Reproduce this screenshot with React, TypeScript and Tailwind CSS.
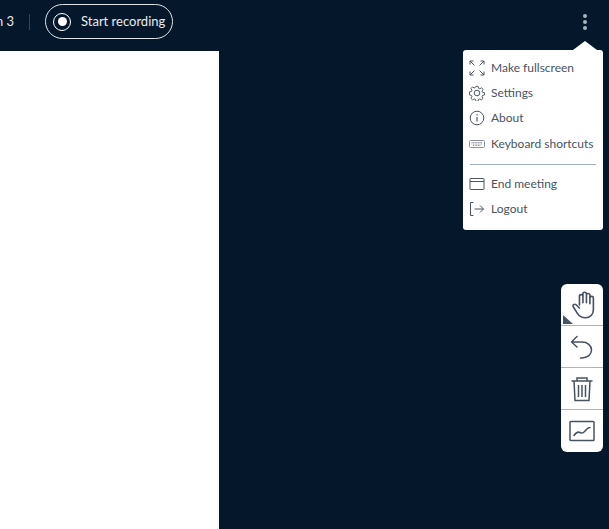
import React from 'react';

const menuTop = [
  { label: 'Make fullscreen', icon: <FullscreenIcon /> },
  { label: 'Settings', icon: <GearIcon /> },
  { label: 'About', icon: <InfoIcon /> },
];

const menuBottom = [
  { label: 'End meeting', icon: <WindowIcon /> },
  { label: 'Logout', icon: <LogoutIcon /> },
];

function FullscreenIcon() {
  return (
    <svg width="16" height="16" viewBox="0 0 16 16" fill="none" stroke="#4a5563" strokeWidth="1">
      <path d="M1 4.500V1H4.500M1 1L5.500 5.500M11.500 1H15V4.500M15 1L10.500 5.500M1 11.500V15H4.500M1 15L5.500 10.500M15 11.500V15H11.500M15 15L10.500 10.500" />
    </svg>
  );
}

function GearIcon() {
  return (
    <svg width="16" height="16" viewBox="0 0 16 16" fill="none" stroke="#4a5563" strokeWidth="1">
      <path d="M6.800 1h2.400l.4 2 1.400.6 1.700-1.100 1.700 1.700-1.100 1.700.6 1.400 2 .4v2.400l-2 .4-.6 1.400 1.100 1.700-1.700 1.700-1.700-1.100-1.400.6-.4 2H6.800l-.4-2-1.400-.6-1.700 1.100-1.700-1.700 1.100-1.700-.6-1.400-2-.4V6.800l2-.4.6-1.400-1.100-1.700 1.700-1.700 1.700 1.100 1.400-.6z" transform="translate(0.4 0.4) scale(0.95)" />
      <circle cx="8" cy="8" r="2.800" />
    </svg>
  );
}

function InfoIcon() {
  return (
    <svg width="16" height="16" viewBox="0 0 16 16" fill="none" stroke="#4a5563" strokeWidth="1">
      <circle cx="8" cy="8" r="6.800" />
      <path d="M8 7v4.500M8 4.200v1.300" strokeWidth="1.200" />
    </svg>
  );
}

function KeyboardIcon() {
  return (
    <svg width="16" height="16" viewBox="0 0 16 16" fill="none" stroke="#8a939d" strokeWidth="1">
      <rect x="0.500" y="4.500" width="15" height="7" rx="1" />
      <path d="M2.500 6.500h11M2.500 8h11M4 9.500h8" strokeDasharray="1 .6" />
    </svg>
  );
}

function WindowIcon() {
  return (
    <svg width="16" height="16" viewBox="0 0 16 16" fill="none" stroke="#4a5563" strokeWidth="1">
      <rect x="1" y="2.500" width="14" height="11" rx="0.500" />
      <path d="M1 5.500h14" />
    </svg>
  );
}

function LogoutIcon() {
  return (
    <svg width="16" height="16" viewBox="0 0 16 16" fill="none" stroke="#4a5563" strokeWidth="1">
      <path d="M4.500 1.500H1.500V14.500H4.500M5.500 8H14.500M11 4.500L14.500 8L11 11.500" />
    </svg>
  );
}

export default function App() {
  return (
    <div className="relative flex h-[529px] w-[609px] flex-col overflow-hidden bg-[#05182b] font-['Lato',sans-serif]">
      {/* Top bar */}
      <header className="flex h-[51px] shrink-0 items-start justify-between pr-[22px]">
        <div className="flex h-[43px] items-center">
          <span className="ml-[-30px] w-[42px] whitespace-nowrap text-right text-[13px] text-[#e3e7eb]">Room 3</span>
          <span className="ml-[17px] h-[16px] w-px bg-[#33475b]" />
          <button className="ml-[15px] flex h-[35px] w-[128px] items-center rounded-full border border-[#dfe4e9] pl-[7px] text-[13px] text-[#e8ebee]">
            <span className="flex h-[18px] w-[18px] items-center justify-center rounded-full border border-white">
              <span className="h-[9px] w-[9px] rounded-full bg-white" />
            </span>
            <span className="ml-[10px] whitespace-nowrap">Start recording</span>
          </button>
        </div>
        <div className="mt-[14px] flex flex-col gap-[2px]">
          <span className="h-[4px] w-[4px] rounded-full bg-[#a9b3bd]" />
          <span className="h-[4px] w-[4px] rounded-full bg-[#a9b3bd]" />
          <span className="h-[4px] w-[4px] rounded-full bg-[#a9b3bd]" />
        </div>
      </header>

      {/* Whiteboard */}
      <main className="w-[219px] flex-1 bg-white" />

      {/* Overflow menu */}
      <div className="absolute left-[463px] top-[50px] w-[140px] rounded-[3px] bg-white pb-[9px] pt-[5px] text-[12px] text-[#48535f]">
        <div className="absolute right-[6px] top-[-9px] h-0 w-0 border-x-[12px] border-b-[9px] border-x-transparent border-b-white" />
        {menuTop.map((item) => (
          <div key={item.label} className="flex h-[25px] items-center pl-[6px]">
            <span className="flex w-[16px] justify-center">{item.icon}</span>
            <span className="ml-[6px] whitespace-nowrap">{item.label}</span>
          </div>
        ))}
        <div className="mt-px flex h-[25px] items-center pl-[6px]">
          <span className="flex w-[16px] justify-center"><KeyboardIcon /></span>
          <span className="ml-[6px] whitespace-nowrap">Keyboard shortcuts</span>
        </div>
        <div className="mx-[7px] mb-[6px] mt-[8px] h-px bg-[#9fb0bb]" />
        {menuBottom.map((item) => (
          <div key={item.label} className="flex h-[25px] items-center pl-[6px]">
            <span className="flex w-[16px] justify-center">{item.icon}</span>
            <span className="ml-[6px] whitespace-nowrap">{item.label}</span>
          </div>
        ))}
      </div>

      {/* Tool strip */}
      <div className="absolute left-[561px] top-[284px] flex w-[42px] flex-col overflow-hidden rounded-[6px] bg-white">
        <div className="relative flex h-[42px] items-center justify-center border-b border-[#a9b5bf]">
          <svg className="ml-[2px]" width="23" height="28" viewBox="1 1 18.500 24" preserveAspectRatio="none" fill="none" stroke="#465260" strokeWidth="1.300" strokeLinecap="round" strokeLinejoin="round">
            <path d="M7 13V5.500a1.400 1.400 0 0 1 2.800 0V11M9.800 11V3.500a1.400 1.400 0 0 1 2.800 0V11M12.600 11V4.500a1.400 1.400 0 0 1 2.800 0V12M15.400 12V7a1.400 1.400 0 0 1 2.800 0V17c0 4-2.500 7-6.500 7-3.500 0-5-1.500-6.500-4L2 14.500c-.8-1.500 1-2.800 2.300-1.700L7 15.500" />
          </svg>
          <div className="absolute bottom-[1px] left-[2px] h-0 w-0 border-b-[9px] border-r-[10px] border-b-[#465260] border-r-transparent" />
        </div>
        <div className="flex h-[42px] items-center justify-center border-b border-[#a9b5bf]">
          <svg width="26" height="26" viewBox="0 0 26 26" fill="none" stroke="#465260" strokeWidth="1.500" strokeLinecap="round" strokeLinejoin="round">
            <path d="M8 2.500L2.500 8L8 13M2.500 8H13c5.500 0 9.500 3.500 9.500 8s-4 8-9.500 8h-1.500" />
          </svg>
        </div>
        <div className="flex h-[42px] items-center justify-center border-b border-[#a9b5bf]">
          <svg width="24" height="26" viewBox="0 0 24 26" fill="none" stroke="#465260" strokeWidth="1.500">
            <path d="M1.500 5H22.500M7 5V2H17V5M4 5L5 24.500H19L20 5M8.500 9V21M12 9V21M15.500 9V21" />
          </svg>
        </div>
        <div className="flex h-[42px] items-center justify-center">
          <svg width="26" height="22" viewBox="0 0 26 22" fill="none" stroke="#465260" strokeWidth="1.500">
            <rect x="1" y="1.500" width="24" height="19" rx="0.800" />
            <path d="M5 15.500C7 12.500 9 11.500 11 12.500S14 13.500 16 11S19 7.500 21 7.500" strokeLinecap="round" />
          </svg>
        </div>
      </div>
    </div>
  );
}
